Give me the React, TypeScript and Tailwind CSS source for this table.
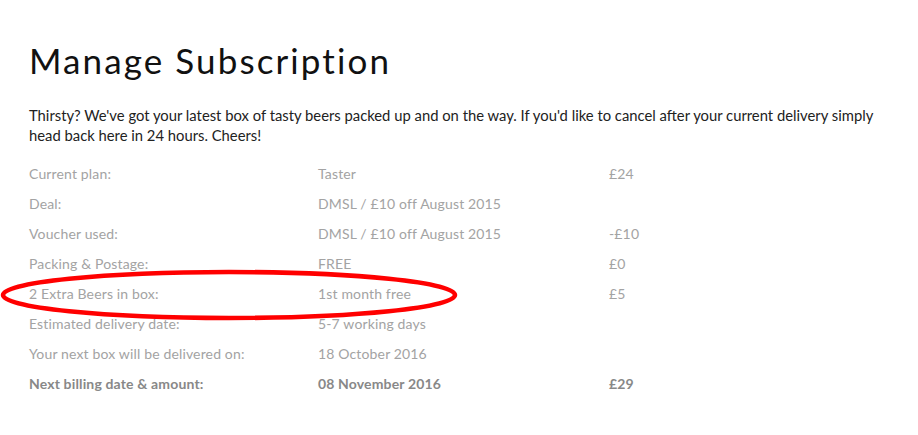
const rows = [
  { label: "Current plan:", value: "Taster", price: "£24" },
  { label: "Deal:", value: "DMSL / £10 off August 2015", price: "" },
  { label: "Voucher used:", value: "DMSL / £10 off August 2015", price: "-£10" },
  { label: "Packing & Postage:", value: "FREE", price: "£0" },
  { label: "2 Extra Beers in box:", value: "1st month free", price: "£5" },
  { label: "Estimated delivery date:", value: "5-7 working days", price: "" },
  { label: "Your next box will be delivered on:", value: "18 October 2016", price: "" },
];

const App = () => {
  return (
    <div className="relative w-[918px] h-[435px] bg-white font-['Lato','Open_Sans',sans-serif] overflow-hidden">
      <div className="pl-[29px] pt-[37px] w-[918px]">
        <h1 className="text-[35px] leading-[46px] tracking-[2.1px] text-[#111] font-normal">
          Manage Subscription
        </h1>
        <p className="mt-[22px] w-[850px] text-[14.8px] leading-[20px] text-[#222]">
          Thirsty? We've got your latest box of tasty beers packed up and on the way. If you'd like to
          cancel after your current delivery simply head back here in 24 hours. Cheers!
        </p>
        <div className="mt-[19px] flex flex-col text-[14px] leading-[20px] tracking-[0.15px] text-[#a3a3a3]">
          {rows.map((r) => (
            <div key={r.label} className="grid grid-cols-[289px_291px_1fr] h-[30px] items-start">
              <span>{r.label}</span>
              <span>{r.value}</span>
              <span>{r.price}</span>
            </div>
          ))}
          <div className="grid grid-cols-[289px_291px_1fr] h-[30px] items-start font-bold text-[#888]">
            <span>Next billing date &amp; amount:</span>
            <span>08 November 2016</span>
            <span>£29</span>
          </div>
        </div>
      </div>
      <svg
        className="absolute left-0 top-[268px] pointer-events-none"
        width="462"
        height="54"
        viewBox="0 0 462 54"
      >
        <ellipse cx="229" cy="27" rx="226" ry="23" fill="none" stroke="#f00" strokeWidth="4.5" />
      </svg>
    </div>
  );
};

export default App;
